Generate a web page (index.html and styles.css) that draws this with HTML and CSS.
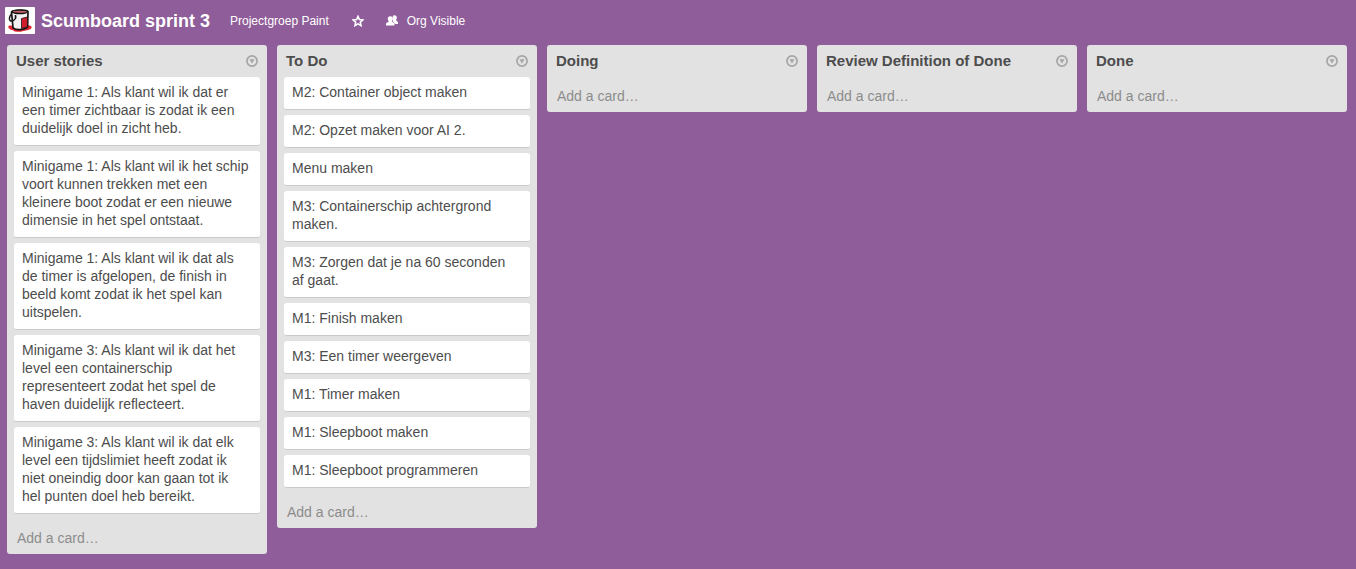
FILE: index.html
```html
<!DOCTYPE html>
<html lang="nl">
<head>
<meta charset="utf-8">
<meta name="viewport" content="width=device-width, initial-scale=1">
<title>Scumboard sprint 3</title>
<link rel="stylesheet" href="styles.css">
</head>
<body>
<svg class="sprite" aria-hidden="true">
  <symbol id="menu-icon" viewBox="0 0 12 12">
    <circle cx="6" cy="6" r="5.1" fill="none" stroke="currentColor" stroke-width="1.7"/>
    <path d="M3.4 4.3h5.2L6 8.6z" fill="currentColor"/>
  </symbol>
</svg>
<header class="board-header">
  <svg class="board-logo" viewBox="0 0 30 27" role="img" aria-label="Paint">
    <rect width="30" height="27" rx="1" fill="#fff"/>
    <path d="M3.500 19c2-1 4 0 6 0l12-1c3 0 6 1 5 3-1 2-5 2-8 3-5 1.500-9 1-11-1-2 0-5-2-4-4z" fill="#e5252f"/>
    <path d="M6.500 5C8 2.800 21.500 2.300 23 4.500L22.600 20c-3 3-11.500 3.500-14.600.8z" fill="#f4f2f2" stroke="#151515" stroke-width="1.700"/>
    <path d="M16.500 11.500l6-1.500v10l-6 1.500z" fill="#d01f2b" stroke="#151515" stroke-width=".8"/>
    <ellipse cx="14.800" cy="4.800" rx="7.700" ry="1.700" fill="#c4626a" stroke="#151515" stroke-width="1.300"/>
    <path d="M6.500 7c-2 2-3 6-1 7 2 .5 5-1 5.500-4.500M10.500 8v4" fill="none" stroke="#151515" stroke-width="1.500"/>
  </svg>
  <h1 class="board-title">Scumboard sprint 3</h1>
  <a class="board-link" href="#org">Projectgroep Paint</a>
  <button class="star-button" type="button" aria-label="Star board">
    <svg class="header-icon" viewBox="0 0 12 12" aria-hidden="true"><path d="M6 1.400l1.400 3.100 3.400.4-2.500 2.300.7 3.400L6 8.900l-3 1.700.7-3.400L1.200 4.900l3.400-.4z" fill="none" stroke="currentColor" stroke-width="1.600"/></svg>
  </button>
  <button class="visibility-button" type="button">
    <svg class="header-icon" viewBox="0 0 12 12" aria-hidden="true"><path d="M6.800.8C8.300-.5 10.800.3 10.800 2.500c0 1.300-.4 2-.8 2.600.1.900 2 1.200 2 2.700V9H8.800L7 6.500z" fill="currentColor"/><path d="M4.300 1.200c1.800 0 2.700 1.100 2.600 2.600 0 1.200-.5 1.900-.9 2.400.1 1.200 2.500 1.200 2.500 3V10.500H0V9.200c0-2 2.500-1.800 2.700-3-.4-.5-.9-1.200-.9-2.400-.1-1.500.7-2.600 2.500-2.600z" fill="currentColor"/></svg>
    Org Visible
  </button>
</header>
<main class="board">
  <section class="list">
    <header class="list-header"><h2 class="list-title">User stories</h2><button class="list-menu" type="button" aria-label="User stories menu"><svg class="menu-icon"><use href="#menu-icon"/></svg></button></header>
    <ul class="cards">
      <li class="card">Minigame 1: Als klant wil ik dat er een timer zichtbaar is zodat ik een duidelijk doel in zicht heb.</li>
      <li class="card">Minigame 1: Als klant wil ik het schip voort kunnen trekken met een kleinere boot zodat er een nieuwe dimensie in het spel ontstaat.</li>
      <li class="card">Minigame 1: Als klant wil ik dat als de timer is afgelopen, de finish in beeld komt zodat ik het spel kan uitspelen.</li>
      <li class="card">Minigame 3: Als klant wil ik dat het level een containerschip representeert zodat het spel de haven duidelijk reflecteert.</li>
      <li class="card">Minigame 3: Als klant wil ik dat elk level een tijdslimiet heeft zodat ik niet oneindig door kan gaan tot ik hel punten doel heb bereikt.</li>
    </ul>
    <button class="add-card" type="button">Add a card…</button>
  </section>
  <section class="list">
    <header class="list-header"><h2 class="list-title">To Do</h2><button class="list-menu" type="button" aria-label="To Do menu"><svg class="menu-icon"><use href="#menu-icon"/></svg></button></header>
    <ul class="cards">
      <li class="card">M2: Container object maken</li>
      <li class="card">M2: Opzet maken voor AI 2.</li>
      <li class="card">Menu maken</li>
      <li class="card">M3: Containerschip achtergrond maken.</li>
      <li class="card">M3: Zorgen dat je na 60 seconden af gaat.</li>
      <li class="card">M1: Finish maken</li>
      <li class="card">M3: Een timer weergeven</li>
      <li class="card">M1: Timer maken</li>
      <li class="card">M1: Sleepboot maken</li>
      <li class="card">M1: Sleepboot programmeren</li>
    </ul>
    <button class="add-card" type="button">Add a card…</button>
  </section>
  <section class="list">
    <header class="list-header"><h2 class="list-title">Doing</h2><button class="list-menu" type="button" aria-label="Doing menu"><svg class="menu-icon"><use href="#menu-icon"/></svg></button></header>
    <button class="add-card" type="button">Add a card…</button>
  </section>
  <section class="list">
    <header class="list-header"><h2 class="list-title">Review Definition of Done</h2><button class="list-menu" type="button" aria-label="Review menu"><svg class="menu-icon"><use href="#menu-icon"/></svg></button></header>
    <button class="add-card" type="button">Add a card…</button>
  </section>
  <section class="list">
    <header class="list-header"><h2 class="list-title">Done</h2><button class="list-menu" type="button" aria-label="Done menu"><svg class="menu-icon"><use href="#menu-icon"/></svg></button></header>
    <button class="add-card" type="button">Add a card…</button>
  </section>
</main>
</body>
</html>
```
FILE: styles.css
```css
* {
  box-sizing: border-box;
}

body {
  margin: 0;
  background: #8f5d99;
  color: #4d4d4d;
  font: 14px/18px "Liberation Sans", Arial, sans-serif;
}

button {
  margin: 0;
  padding: 0;
  border: 0;
  background: none;
  color: inherit;
  font: inherit;
  cursor: pointer;
}

.sprite {
  display: none;
}

.board-header {
  display: flex;
  align-items: center;
  padding: 7px 5px 11px;
  color: #fff;
  font-size: 12px;
}

.board-logo {
  width: 30px;
  height: 27px;
}

.board-title {
  margin: 0 20px 0 6px;
  font-size: 18px;
  line-height: 26px;
}

.board-link {
  color: inherit;
  text-decoration: none;
}

.header-icon {
  display: block;
  width: 12px;
  height: 12px;
}

.star-button {
  margin: 0 22px 0 23px;
}

.visibility-button {
  display: flex;
  align-items: center;
  gap: 9px;
}

.board {
  display: flex;
  align-items: flex-start;
  gap: 10px;
  padding: 0 9px 10px 7px;
}

.list {
  flex: 1 0 260px;
  border-radius: 3px;
  background: #e2e2e2;
}

.list-header {
  display: flex;
  align-items: center;
  justify-content: space-between;
  height: 32px;
  padding: 0 9px;
}

.list-title {
  margin: 0;
  font-size: 15px;
  line-height: 18px;
}

.list-menu {
  color: #a6a6a6;
}

.menu-icon {
  display: block;
  width: 12px;
  height: 12px;
}

.cards {
  display: flex;
  flex-direction: column;
  gap: 5px;
  margin: 0;
  padding: 0 7px 5px;
  list-style: none;
}

.card {
  padding: 6px 10px 8px 8px;
  border-bottom: 1px solid #c9c9c9;
  border-radius: 3px;
  background: #fff;
}

.add-card {
  display: block;
  width: 100%;
  padding: 10px 10px 7px;
  color: #8c8c8c;
  text-align: left;
}
```
